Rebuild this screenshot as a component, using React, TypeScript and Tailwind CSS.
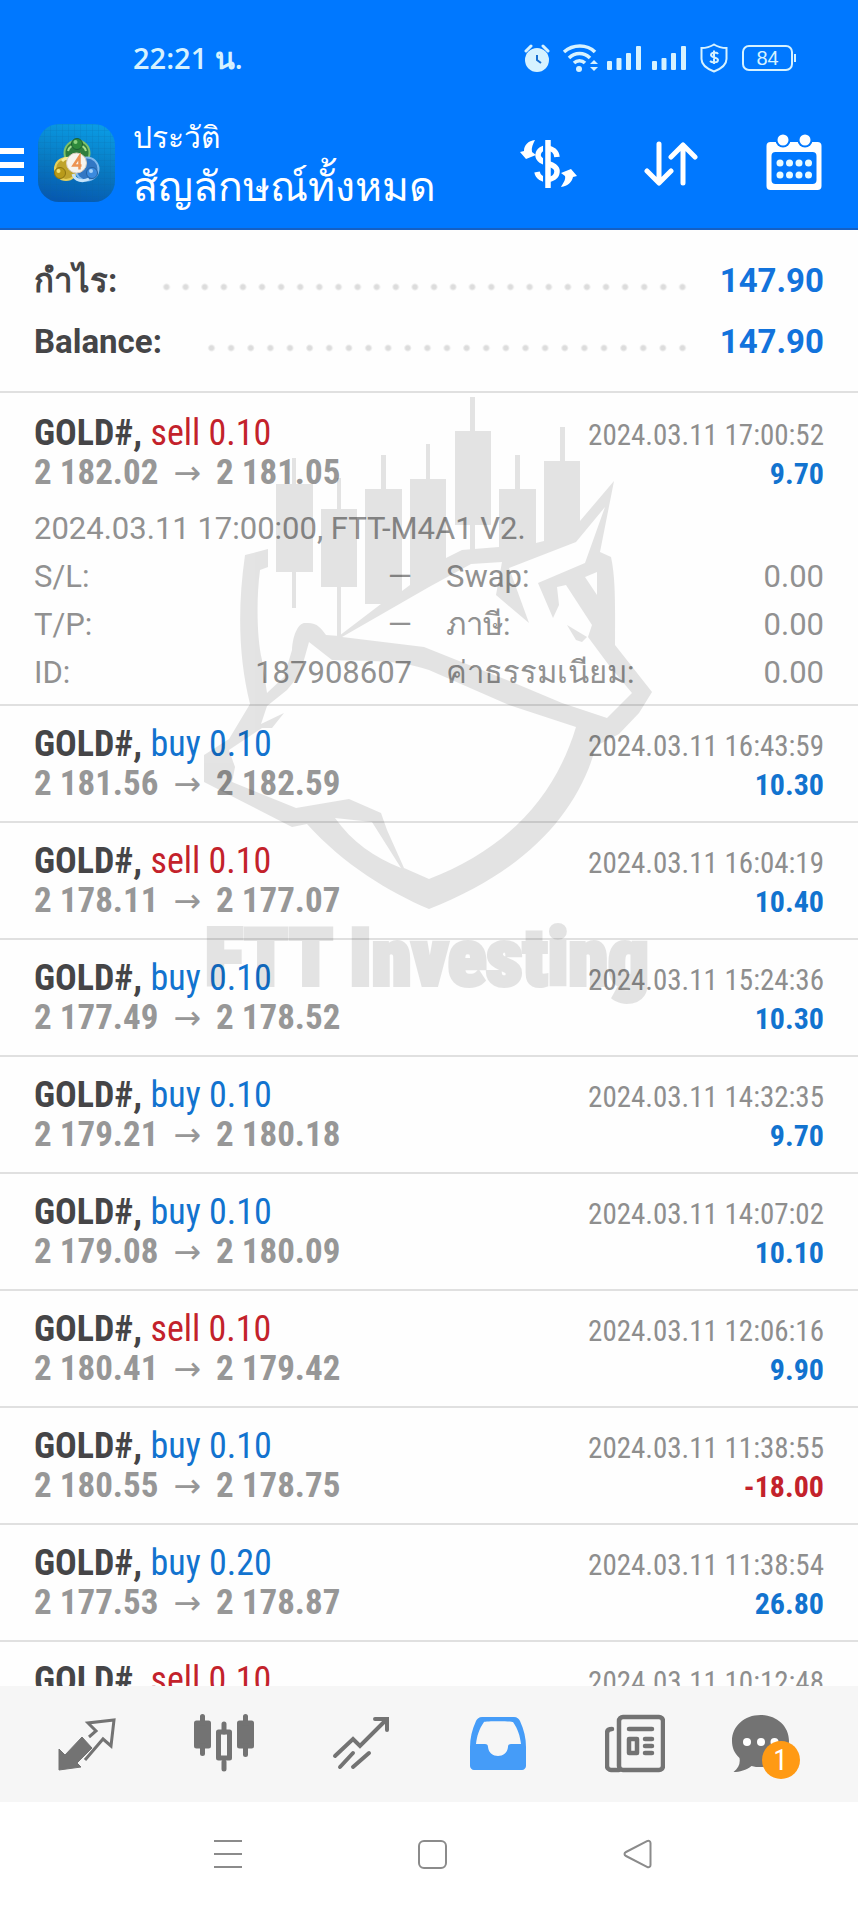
import type { ReactNode } from 'react'

type Deal = {
  side: 'buy' | 'sell'
  volume: string
  open: string
  close: string
  time: string
  profit: string
  details?: {
    comment: string
    left: [string, string][]
    right: [string, string][]
  }
}

const summary = [
  { label: 'กำไร:', value: '147.90' },
  { label: 'Balance:', value: '147.90' },
]

const deals: Deal[] = [
  {
    side: 'sell',
    volume: '0.10',
    open: '2 182.02',
    close: '2 181.05',
    time: '2024.03.11 17:00:52',
    profit: '9.70',
    details: {
      comment: '2024.03.11 17:00:00, FTT-M4A1 V2.',
      left: [
        ['S/L:', '—'],
        ['T/P:', '—'],
        ['ID:', '187908607'],
      ],
      right: [
        ['Swap:', '0.00'],
        ['ภาษี:', '0.00'],
        ['ค่าธรรมเนียม:', '0.00'],
      ],
    },
  },
  { side: 'buy', volume: '0.10', open: '2 181.56', close: '2 182.59', time: '2024.03.11 16:43:59', profit: '10.30' },
  { side: 'sell', volume: '0.10', open: '2 178.11', close: '2 177.07', time: '2024.03.11 16:04:19', profit: '10.40' },
  { side: 'buy', volume: '0.10', open: '2 177.49', close: '2 178.52', time: '2024.03.11 15:24:36', profit: '10.30' },
  { side: 'buy', volume: '0.10', open: '2 179.21', close: '2 180.18', time: '2024.03.11 14:32:35', profit: '9.70' },
  { side: 'buy', volume: '0.10', open: '2 179.08', close: '2 180.09', time: '2024.03.11 14:07:02', profit: '10.10' },
  { side: 'sell', volume: '0.10', open: '2 180.41', close: '2 179.42', time: '2024.03.11 12:06:16', profit: '9.90' },
  { side: 'buy', volume: '0.10', open: '2 180.55', close: '2 178.75', time: '2024.03.11 11:38:55', profit: '-18.00' },
  { side: 'buy', volume: '0.20', open: '2 177.53', close: '2 178.87', time: '2024.03.11 11:38:54', profit: '26.80' },
]

function StatusBar() {
  return (
    <div className="flex h-[116px] items-center justify-between pl-[133px] pr-[62px] text-[#d6f2ff]">
      <span className="font-['Open_Sans','Noto_Sans',sans-serif] text-[29px] font-semibold leading-8">22:21 น.</span>
      <div className="flex items-center">
        <svg width="26" height="28" viewBox="0 0 26 28" aria-hidden="true">
          <circle cx="13" cy="16" r="12" fill="currentColor" />
          <path d="M2 7 7 2M24 7l-5-5" stroke="currentColor" strokeWidth="3" strokeLinecap="round" />
          <path d="M13 11v5l4 3" stroke="#1a6fd0" strokeWidth="2" fill="none" />
        </svg>
        <svg className="ml-3" width="37" height="28" viewBox="0 0 37 28" fill="none" aria-hidden="true">
          <path d="M2 8c9-8 23-8 31 0M7 14c6-6 15-6 21 0M12 19c3-3 8-3 11 0" stroke="currentColor" strokeWidth="3.5" />
          <circle cx="17" cy="25" r="3" fill="currentColor" />
          <path d="m28 20 4-4 4 4zM28 23l4 4 4-4z" fill="currentColor" />
        </svg>
        <Signal className="ml-2" />
        <Signal className="ml-[11px]" />
        <svg className="ml-[14px]" width="28" height="30" viewBox="0 0 28 30" fill="none" stroke="currentColor" aria-hidden="true">
          <path d="M14 1.5C10 4 6 5 1.5 5v11c0 6 6 10 12.5 12.5C20.5 26 26.5 22 26.5 16V5C22 5 18 4 14 1.5z" strokeWidth="2" />
          <path d="M18 11c-1-2-7-2-7 1s7 2 7 5-6 3-8 1M14 7.5V21" strokeWidth="2" />
        </svg>
        <span className="ml-[14px] flex h-[26px] w-[51px] items-center justify-center rounded-[7px] border-2 border-current font-['Liberation_Sans',sans-serif] text-[20px] leading-none">
          84
        </span>
        <span className="ml-px h-2 w-[2px] bg-current" />
      </div>
    </div>
  )
}

function Signal({ className }: { className: string }) {
  return (
    <svg className={className} width="34" height="26" viewBox="0 0 34 26" fill="currentColor" aria-hidden="true">
      <rect x="0" y="16" width="5" height="9" rx="1" />
      <rect x="9.5" y="13" width="5" height="12" rx="1" />
      <rect x="19" y="8" width="5" height="17" rx="1" />
      <rect x="29" y="1" width="5" height="24" rx="1" />
    </svg>
  )
}

function AppLogo() {
  return (
    <svg width="77" height="78" viewBox="0 0 77 78" aria-hidden="true">
      <defs>
        <linearGradient id="tile" x1="0.6" y1="0" x2="0.4" y2="1">
          <stop offset="0" stopColor="#0a9be4" />
          <stop offset="0.55" stopColor="#0878c0" />
          <stop offset="1" stopColor="#0659b0" />
        </linearGradient>
        <pattern id="mesh" width="6" height="6" patternUnits="userSpaceOnUse">
          <path d="M0 0H6M0 0V6" stroke="#0a5f9e" strokeWidth="0.5" opacity="0.6" />
        </pattern>
      </defs>
      <rect width="77" height="78" rx="21" fill="url(#tile)" />
      <rect width="77" height="78" rx="21" fill="url(#mesh)" />
      <circle cx="39" cy="29" r="12.5" fill="#2f7d3d" stroke="#7fc069" strokeWidth="2" />
      <path d="M30 27c2-8 16-8 18 0" fill="none" stroke="#a6dc8c" strokeWidth="2" />
      <circle cx="28" cy="45" r="11" fill="#bfa32c" stroke="#e6cf58" strokeWidth="2" />
      <path d="M24 37c4-4 8-3 10 0" fill="none" stroke="#f8ec96" strokeWidth="3" />
      <circle cx="49" cy="45" r="11.5" fill="#3277c4" stroke="#7fb9ee" strokeWidth="2" />
      <path d="M35 50c2 7 10 8 16 5" fill="none" stroke="#c3e3fb" strokeWidth="3" />
      <circle cx="39" cy="20" r="5.5" fill="#2e8a3c" stroke="#1d5f33" strokeWidth="1" />
      <circle cx="37.5" cy="18" r="2" fill="#8ad07d" />
      <circle cx="22" cy="49" r="5.5" fill="#b89a1a" stroke="#8c7410" strokeWidth="1" />
      <circle cx="20.5" cy="47" r="2" fill="#f3e277" />
      <circle cx="54" cy="49" r="5.5" fill="#3b8ade" stroke="#2360a0" strokeWidth="1" />
      <circle cx="53" cy="47" r="2" fill="#a8d4fa" />
      <circle cx="38.5" cy="39" r="10" fill="#f7f4ee" stroke="#d8cdbd" />
      <path d="M41.5 45.5V32.5l-6 9h8" fill="none" stroke="#ec9352" strokeWidth="2.5" />
    </svg>
  )
}

function Header() {
  return (
    <header className="flex h-[114px] items-start border-b-2 border-[#1560c4] text-white">
      <button type="button" aria-label="Menu" className="mt-8 flex w-6 flex-col gap-2">
        <span className="h-[6px] bg-white" />
        <span className="h-[6px] bg-white" />
        <span className="h-[6px] bg-white" />
      </button>
      <div className="ml-[14px] mt-2">
        <AppLogo />
      </div>
      <h1 className="ml-[18px] grow font-['Roboto',sans-serif] font-normal">
        <span className="block text-[30px] leading-[43px]">ประวัติ</span>
        <span className="block text-[41px] leading-[56px]">สัญลักษณ์ทั้งหมด</span>
      </h1>
      <div className="flex pr-9 pt-[14px]">
        <button type="button" aria-label="Deals filter">
          <svg width="60" height="62" viewBox="0 0 60 62" fill="none" aria-hidden="true">
            <path d="M38 27c-1-11-18-12-19-2 0 10 20 7 19 17-1 10-18 10-20 0" stroke="#fff" strokeWidth="5.5" />
            <path d="M27.5 9v50" stroke="#0078ff" strokeWidth="7" />
            <path d="M29 10v48" stroke="#fff" strokeWidth="5.5" />
            <path d="M16 10C9 11 5 15 5 21L1 22l6 7 10-4-4-3c-1-4 1-8 3-12z" fill="#fff" />
            <path d="M42 57c7-1 11-5 12-10l4-1-6-7-10 4 4 3c1 4-2 7-4 11z" fill="#fff" />
          </svg>
        </button>
        <button type="button" aria-label="Sort" className="ml-[65px]">
          <svg width="54" height="62" viewBox="0 0 54 62" fill="none" stroke="#fff" strokeWidth="5" strokeLinecap="round" aria-hidden="true">
            <path d="M15 14v38M3 41l12 12 12-12" strokeLinejoin="round" />
            <path d="M39 53V15M27 27l12-12 12 12" strokeLinejoin="round" />
          </svg>
        </button>
        <button type="button" aria-label="Period" className="ml-[68px]">
          <svg width="56" height="62" viewBox="0 0 56 62" aria-hidden="true">
            <rect x="0.5" y="12" width="55" height="48" rx="4" fill="#fff" />
            <circle cx="17" cy="10" r="7.5" fill="#0078ff" />
            <circle cx="39" cy="10" r="7.5" fill="#0078ff" />
            <circle cx="17" cy="10" r="5.5" fill="#fff" />
            <circle cx="39" cy="10" r="5.5" fill="#fff" />
            <rect x="5.5" y="22" width="45" height="32" rx="4" fill="#0078ff" />
            {[33, 45].map((y) =>
              [14, 23.5, 33, 42.5].map((x) => <circle key={`${x}-${y}`} cx={x} cy={y} r="3.5" fill="#e8fbff" />)
            )}
          </svg>
        </button>
      </div>
    </header>
  )
}

function Summary() {
  return (
    <dl className="border-b-2 border-[#e0e0e0] px-[34px] pb-[19px] pt-5 font-['Roboto',sans-serif] text-[33px] font-bold">
      {summary.map((row) => (
        <div key={row.label} className="flex h-[61px] items-center">
          <dt className="text-[#454547]">{row.label}</dt>
          <dd className="flex grow items-center">
            <span className="ml-10 mr-7 mt-3 h-2 grow bg-[radial-gradient(circle,#dcdcdc_2px,transparent_4px)] bg-[length:19px_8px] bg-repeat-space" />
            <span className="text-[#1273dc]">{row.value}</span>
          </dd>
        </div>
      ))}
    </dl>
  )
}

function Symbol({ deal }: { deal: Pick<Deal, 'side' | 'volume'> }) {
  return (
    <p className="text-[36px]">
      <span className="font-bold text-[#454547]">GOLD#, </span>
      <span className={deal.side === 'buy' ? 'text-[#1273cf]' : 'text-[#c3222b]'}>
        {deal.side} {deal.volume}
      </span>
    </p>
  )
}

function DealRow({ deal }: { deal: Deal }) {
  return (
    <li className="border-b-2 border-[#e0e0e0] px-[34px] pb-[17px] pt-[18px]">
      <div className="flex h-10 items-baseline justify-between font-['Roboto_Condensed',sans-serif] leading-10">
        <Symbol deal={deal} />
        <time className="text-[29px] text-[#8e8e8e]">{deal.time}</time>
      </div>
      <div className="flex h-10 items-baseline justify-between font-['Roboto_Condensed',sans-serif] font-bold leading-10">
        <p className="text-[35px] text-[#979797]">
          {deal.open}
          <span className="mx-[15px] font-['DejaVu_Sans',sans-serif] text-[33px] font-normal leading-none">→</span>
          {deal.close}
        </p>
        <span className={`text-[30px] ${deal.profit.startsWith('-') ? 'text-[#c3222b]' : 'text-[#1273cf]'}`}>{deal.profit}</span>
      </div>
      {deal.details && (
        <div className="-mb-[10px] mt-3 font-['Roboto',sans-serif] text-[31px] leading-[48px] text-[#919191]">
          <p>{deal.details.comment}</p>
          <div className="grid grid-cols-2 gap-[34px]">
            <DetailList items={deal.details.left} />
            <DetailList items={deal.details.right} />
          </div>
        </div>
      )}
    </li>
  )
}

function DetailList({ items }: { items: [string, string][] }) {
  return (
    <dl>
      {items.map(([label, value]) => (
        <div key={label} className="flex h-12 justify-between">
          <dt>{label}</dt>
          <dd>{value}</dd>
        </div>
      ))}
    </dl>
  )
}

// translucent brand mark that lies over the deals
function Watermark() {
  return (
    <svg
      className="pointer-events-none absolute left-1/2 top-[160px] w-[460px] -translate-x-1/2"
      viewBox="200 390 460 630"
      aria-hidden="true"
    >
      <g opacity="0.1">
        <path d="M293 458h4v150h-4zM277 484h37v88h-37zM338 478h4v158h-4zM322 509h36v78h-36zM382 455h5v40h-5zM427 444h4v40h-4zM471 397h5v155h-5zM456 431h36v94h-36zM516 455h5v40h-5zM561 427h5v40h-5z" />
        <path
          fillRule="evenodd"
          d="M366 489H403V591L411 585V479H447V558L463 550 500 547V489H537V543L545 541V461H581V521L615 481 601 552 612 557C617 580 616 610 616 645L653 692 640 713 620 734 597 746C580 810 530 870 430 909C390 892 345 865 308 824L293 827 205 782V755L230 739 251 704C240 660 238 610 246 555L269 549V567L261 570C257 600 258 640 263 660L268 693 285 677 293 650C294 633 300 623 306 623C318 622 322 628 327 635L340 636 382 604H366Z
             M343 637L430 587 472 564 503 562 497 595 530 623 510 568 577 542 606 507 586 563 539 583 554 618 560 605 558 587 567 585 593 625 589 637 612 668 633 693 608 718 563 703 513 682 465 663 425 647Z
             M310 642L333 660C360 662 395 658 430 670L510 705 577 727C555 800 505 850 430 879L405 868 388 830 382 813 350 799 297 808 233 782 236 767 230 750 263 728 273 728 285 713 262 724 268 706 288 690 301 674Z
             M586 577L598 572V595Z
             M336 818L373 822 402 868C375 857 353 842 336 818Z"
        />
        <path d="M568 625l20 12-5 5-6-2z" />
        <text
          x="206"
          y="985"
          fontSize="80"
          fontWeight="900"
          stroke="#000"
          strokeWidth="4"
          className="font-['Roboto_Condensed',sans-serif]"
        >
          FTT Investing
        </text>
      </g>
    </svg>
  )
}

function Tab({ label, active, children }: { label: string; active?: boolean; children: ReactNode }) {
  return (
    <button
      type="button"
      aria-label={label}
      className={`flex items-center justify-center ${active ? 'text-[#459cf8]' : 'text-[#737373]'}`}
    >
      {children}
    </button>
  )
}

function TabBar() {
  return (
    <nav className="grid h-[116px] shrink-0 grid-cols-6 bg-[#f6f6f6] px-[18px] pb-[2px]">
      <Tab label="Quotes">
        <svg width="60" height="60" viewBox="0 0 60 60" aria-hidden="true">
          <path d="M2 57V36l6 6 17-18 10 11-15 15 4 4z" fill="currentColor" stroke="currentColor" strokeLinejoin="round" />
          <path d="M32 24l7-6-8-8 26-3-3 26-8-7-18 21" fill="none" stroke="currentColor" strokeWidth="3" />
        </svg>
      </Tab>
      <Tab label="Chart">
        <svg width="60" height="60" viewBox="0 0 60 60" fill="none" stroke="currentColor" strokeWidth="5" strokeLinecap="round" aria-hidden="true">
          <path d="M8.5 3.5v37M51.5 3.5v38M30 11v8M30 49v7" />
          <rect x="2.5" y="10" width="12" height="23" fill="currentColor" strokeLinejoin="round" />
          <rect x="45.5" y="10" width="12" height="23" fill="currentColor" strokeLinejoin="round" />
          <rect x="24.5" y="19" width="11" height="26" strokeLinejoin="round" />
        </svg>
      </Tab>
      <Tab label="Trade">
        <svg width="60" height="60" viewBox="0 0 60 60" fill="none" stroke="currentColor" strokeWidth="4" strokeLinecap="round" aria-hidden="true">
          <path d="M4 43l18-17 7 7L55 7M44 6h12v11M9 54l13-14M22 54l16-14" />
        </svg>
      </Tab>
      <Tab label="History" active>
        <svg width="60" height="60" viewBox="0 0 60 60" aria-hidden="true">
          <path
            fillRule="evenodd"
            fill="currentColor"
            d="M14 4h32c3 0 5 2 6 4 4 9 6 17 6 26v19c0 2-2 4-4 4H6c-2 0-4-2-4-4V34C2 25 4 17 8 8c1-2 3-4 6-4zM16 9c-5 7-7 14-8 22h9c2 0 3 1 3 3 1 12 19 12 20 0 0-2 1-3 3-3h10c-1-8-3-15-8-22-1-1-28-1-29 0z"
          />
        </svg>
      </Tab>
      <Tab label="News">
        <svg width="60" height="60" viewBox="0 0 60 60" fill="none" stroke="currentColor" strokeWidth="4.5" strokeLinecap="round" aria-hidden="true">
          <rect x="14" y="4" width="44" height="53" rx="4" />
          <path d="M14 57H6c-2 0-4-2-4-4V20c0-2 1-4 5-4" />
          <path d="M24 16h23M40 26h7M40 33h7M40 40h7" />
          <rect x="24" y="26" width="8" height="14" strokeLinejoin="round" />
        </svg>
      </Tab>
      <Tab label="Messages">
        <span className="relative">
          <svg width="80" height="64" viewBox="0 0 80 64" aria-hidden="true">
            <path d="M28.5 4c16 0 28.5 11 28.5 26S44 56 28.5 56c-3 0-6 0-9-1-5 4-12 6-18 6 5-4 7-8 6-14C2 42 0 36 0 30 0 15 12.5 4 28.5 4z" fill="currentColor" />
            <circle cx="15" cy="31" r="4" fill="#fff" />
            <circle cx="29" cy="31" r="4" fill="#fff" />
            <circle cx="42.5" cy="31" r="4" fill="#fff" />
          </svg>
          <span className="absolute -bottom-[4px] right-[12px] flex size-[38px] items-center justify-center rounded-full bg-[#ff9a14] font-['Roboto_Condensed',sans-serif] text-[29px] leading-none text-white">
            1
          </span>
        </span>
      </Tab>
    </nav>
  )
}

function SystemNav() {
  return (
    <nav className="grid h-[106px] shrink-0 grid-cols-3 bg-white pb-[2px] pl-[125px] pr-[118px] text-[#8b8b8b]">
      <button type="button" aria-label="Recent apps" className="flex items-center justify-center">
        <svg width="30" height="32" viewBox="0 0 30 32" stroke="currentColor" strokeWidth="2" aria-hidden="true">
          <path d="M1 3h28M1 16h28M1 29h28" />
        </svg>
      </button>
      <button type="button" aria-label="Home" className="flex items-center justify-center">
        <span className="size-[29px] rounded-md border-2 border-current" />
      </button>
      <button type="button" aria-label="Back" className="flex items-center justify-center">
        <svg width="30" height="32" viewBox="0 0 30 32" fill="none" stroke="currentColor" strokeWidth="2" strokeLinejoin="round" aria-hidden="true">
          <path d="M3 14 24 3.2c2-1 3.5 0 3.5 1.8v22c0 1.8-1.5 2.8-3.5 1.8L3 18c-2-1-2-3 0-4z" />
        </svg>
      </button>
    </nav>
  )
}

export default function App() {
  return (
    <div className="flex min-h-screen flex-col bg-[#fefefe]">
      <div className="bg-[#0078ff]">
        <StatusBar />
        <Header />
      </div>
      <main className="relative grow">
        <Summary />
        <ul className="pt-[2px]">
          {deals.map((deal) => (
            <DealRow key={deal.time} deal={deal} />
          ))}
        </ul>
        {/* next deal, cut off by the tab bar */}
        <div className="flex h-11 items-baseline justify-between overflow-hidden px-[34px] pt-[18px] font-['Roboto_Condensed',sans-serif] leading-10">
          <Symbol deal={{ side: 'sell', volume: '0.10' }} />
          <time className="text-[29px] text-[#8e8e8e]">2024.03.11 10:12:48</time>
        </div>
        <Watermark />
      </main>
      <TabBar />
      <SystemNav />
    </div>
  )
}
